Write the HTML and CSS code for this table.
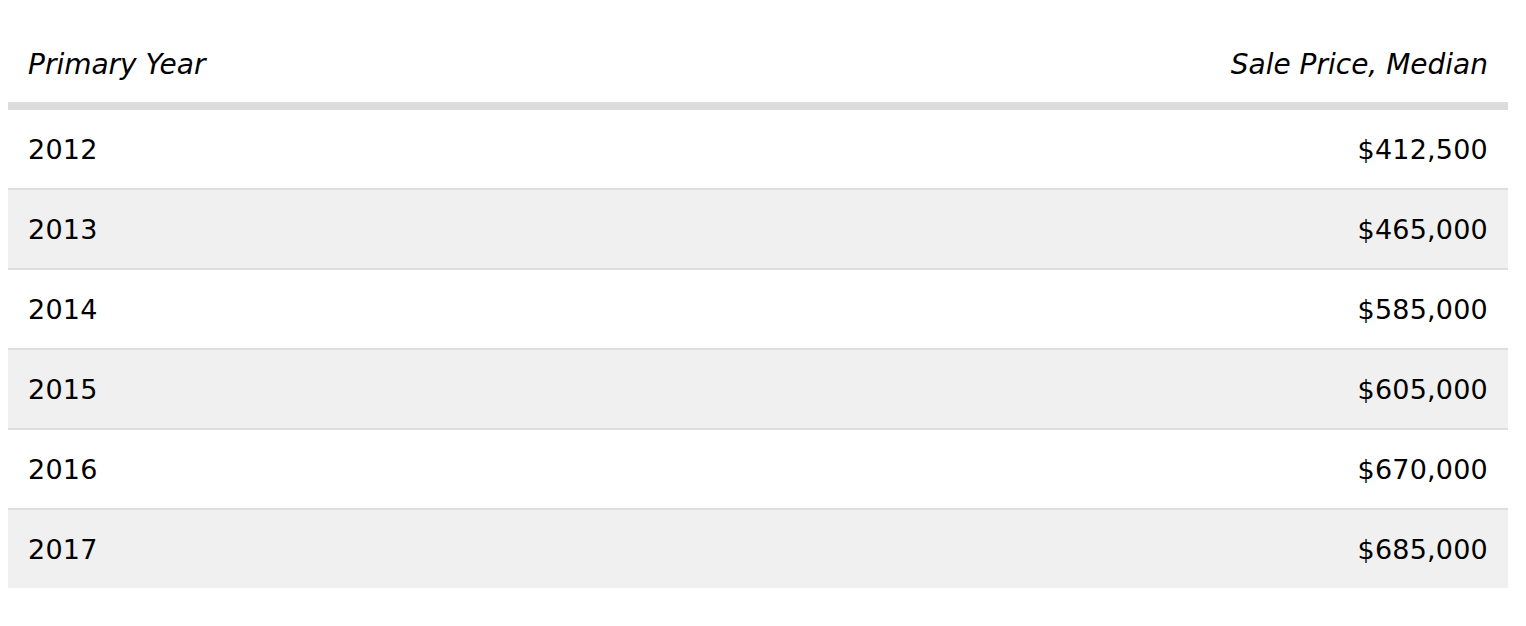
FILE: index.html
```html
<!DOCTYPE html>
<html>
<head>
<meta charset="utf-8">
<link rel="stylesheet" href="styles.css">
</head>
<body>
<table class="data">
  <thead>
    <tr>
      <th class="left">Primary Year</th>
      <th class="right">Sale Price, Median</th>
    </tr>
  </thead>
  <tbody>
    <tr><td class="left">2012</td><td class="right">$412,500</td></tr>
    <tr><td class="left">2013</td><td class="right">$465,000</td></tr>
    <tr><td class="left">2014</td><td class="right">$585,000</td></tr>
    <tr><td class="left">2015</td><td class="right">$605,000</td></tr>
    <tr><td class="left">2016</td><td class="right">$670,000</td></tr>
    <tr><td class="left">2017</td><td class="right">$685,000</td></tr>
  </tbody>
</table>
</body>
</html>
```

FILE: styles.css
```css
body {
  margin: 8px;
  background: #fff;
  font-family: "DejaVu Sans", Verdana, sans-serif;
  color: #000;
}
.data {
  width: 1500px;
  border-collapse: collapse;
  margin-top: 22px;
  font-size: 27px;
}
.data th {
  font-weight: normal;
  font-style: italic;
  font-size: 28px;
  height: 76px;
  padding: 0 20px 4px;
  border-bottom: 8px solid #dcdcdc;
  box-sizing: border-box;
}
.data td {
  height: 78px;
  padding: 0 20px;
  border-bottom: 2px solid #dedede;
  letter-spacing: 0.2px;
}
.data tbody tr:nth-child(even) td {
  background: #f0f0f0;
}
.data tbody tr:last-child td {
  border-bottom: none;
}
.left { text-align: left; }
.right { text-align: right; }
```
